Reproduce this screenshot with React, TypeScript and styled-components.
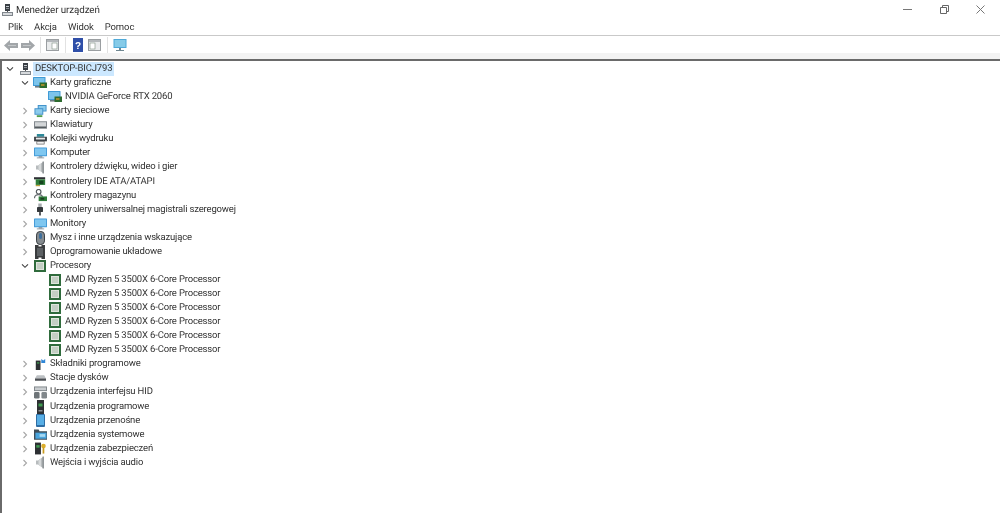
import React from "react";
import styled, { createGlobalStyle } from "styled-components";

const GlobalStyle = createGlobalStyle`
  html, body {
    margin: 0;
    padding: 0;
    background: #fff;
  }
  body {
    font-family: Roboto, "Noto Sans", sans-serif;
    color: #333;
    text-rendering: geometricPrecision;
  }
`;

type IconName =
  | "display"
  | "network"
  | "keyboard"
  | "printer"
  | "monitor"
  | "speaker"
  | "ide"
  | "storage"
  | "usb"
  | "mouse"
  | "firmware"
  | "cpu"
  | "software"
  | "disk"
  | "hid"
  | "prog"
  | "portable"
  | "system"
  | "security";

type Node = { label: string; icon: IconName; level: number; state?: "open" | "closed" };

const cpuRows: Node[] = Array.from({ length: 6 }, () => ({
  label: "AMD Ryzen 5 3500X 6-Core Processor",
  icon: "cpu" as IconName,
  level: 2,
}));

const tree: Node[] = [
  { label: "Karty graficzne", icon: "display", level: 1, state: "open" },
  { label: "NVIDIA GeForce RTX 2060", icon: "display", level: 2 },
  { label: "Karty sieciowe", icon: "network", level: 1, state: "closed" },
  { label: "Klawiatury", icon: "keyboard", level: 1, state: "closed" },
  { label: "Kolejki wydruku", icon: "printer", level: 1, state: "closed" },
  { label: "Komputer", icon: "monitor", level: 1, state: "closed" },
  { label: "Kontrolery dźwięku, wideo i gier", icon: "speaker", level: 1, state: "closed" },
  { label: "Kontrolery IDE ATA/ATAPI", icon: "ide", level: 1, state: "closed" },
  { label: "Kontrolery magazynu", icon: "storage", level: 1, state: "closed" },
  { label: "Kontrolery uniwersalnej magistrali szeregowej", icon: "usb", level: 1, state: "closed" },
  { label: "Monitory", icon: "monitor", level: 1, state: "closed" },
  { label: "Mysz i inne urządzenia wskazujące", icon: "mouse", level: 1, state: "closed" },
  { label: "Oprogramowanie układowe", icon: "firmware", level: 1, state: "closed" },
  { label: "Procesory", icon: "cpu", level: 1, state: "open" },
  ...cpuRows,
  { label: "Składniki programowe", icon: "software", level: 1, state: "closed" },
  { label: "Stacje dysków", icon: "disk", level: 1, state: "closed" },
  { label: "Urządzenia interfejsu HID", icon: "hid", level: 1, state: "closed" },
  { label: "Urządzenia programowe", icon: "prog", level: 1, state: "closed" },
  { label: "Urządzenia przenośne", icon: "portable", level: 1, state: "closed" },
  { label: "Urządzenia systemowe", icon: "system", level: 1, state: "closed" },
  { label: "Urządzenia zabezpieczeń", icon: "security", level: 1, state: "closed" },
  { label: "Wejścia i wyjścia audio", icon: "speaker", level: 1, state: "closed" },
];

const PcGlyph = () => (
  <svg width="11" height="12" viewBox="0 0 11 12">
    <rect x="3" y="0" width="5" height="7" fill="#3a3f45" />
    <rect x="4" y="2" width="3" height="1" fill="#c9ced2" />
    <rect x="4" y="4" width="3" height="1" fill="#8b9095" />
    <rect x="0" y="8" width="11" height="4" fill="#80868c" />
    <rect x="1" y="9" width="9" height="2" fill="#d6d9dc" />
    <rect x="5" y="7" width="1" height="1" fill="#555" />
  </svg>
);

const DeviceIcon = ({ name }: { name: IconName }) => {
  switch (name) {
    case "display":
      return (
        <svg width="14" height="12" viewBox="0 0 14 12">
          <rect x="0" y="0" width="12.5" height="9" rx="0.5" fill="#3f9ad6" />
          <rect x="1" y="1" width="10.5" height="7" fill="#7cc4ec" />
          <rect x="2" y="9" width="6" height="1.6" fill="#6d7a83" />
          <rect x="6.5" y="5.5" width="7.5" height="5.5" fill="#2d6b2f" />
          <rect x="8" y="7" width="3.5" height="2" fill="#9c8a2c" />
        </svg>
      );
    case "network":
      return (
        <svg width="13" height="13" viewBox="0 0 14 14">
          <rect x="4" y="0" width="9.5" height="7" fill="#3f8fc9" />
          <rect x="5" y="1" width="7.5" height="5" fill="#8ccbec" />
          <rect x="0.5" y="3.5" width="9.5" height="7" fill="#3f8fc9" />
          <rect x="1.5" y="4.5" width="7.5" height="5" fill="#8ccbec" />
          <rect x="3" y="11" width="6" height="2" fill="#4f9e4f" />
        </svg>
      );
    case "keyboard":
      return (
        <svg width="13" height="10" viewBox="0 0 14 10">
          <rect x="0" y="1" width="14" height="8" fill="#7d8388" />
          <rect x="1" y="2" width="12" height="4.5" fill="#d3d6d8" />
          <rect x="1" y="7" width="12" height="1" fill="#4d5256" />
        </svg>
      );
    case "printer":
      return (
        <svg width="13" height="11" viewBox="0 0 14 12">
          <rect x="3" y="0" width="8" height="3" fill="#2e8a9a" />
          <rect x="0" y="3" width="14" height="5" fill="#3b4045" />
          <rect x="2" y="4" width="10" height="2" fill="#e7e9ea" />
          <rect x="3" y="8" width="8" height="3" fill="#f2f2f2" stroke="#555" strokeWidth="0.7" />
        </svg>
      );
    case "monitor":
      return (
        <svg width="13" height="12" viewBox="0 0 14 13">
          <rect x="0" y="0.5" width="14" height="9.5" rx="0.6" fill="#3e97d6" />
          <rect x="1" y="1.5" width="12" height="7.5" fill="#7fc7f0" />
          <rect x="5" y="10" width="4" height="1.5" fill="#7b8b96" />
          <rect x="3" y="11.3" width="8" height="1" fill="#8f9aa2" />
        </svg>
      );
    case "speaker":
      return (
        <svg width="8" height="13" viewBox="0 0 8 13">
          <path d="M0 4.5h2L7 1v11L2 8.5H0z" fill="#b7bbbd" />
          <path d="M2.5 4.2v4.6L5 10.6V2.4z" fill="#d6d9da" />
          <rect x="6.6" y="0.5" width="1.2" height="12" fill="#777d80" />
        </svg>
      );
    case "ide":
      return (
        <svg width="12" height="11" viewBox="0 0 14 12">
          <rect x="0" y="1" width="13" height="2.5" fill="#2d3034" />
          <rect x="2" y="3.5" width="11" height="6.5" fill="#2f7d3a" />
          <rect x="6" y="5" width="5" height="4" fill="#16451f" />
          <rect x="2" y="10" width="5" height="1.5" fill="#b8a23c" />
        </svg>
      );
    case "storage":
      return (
        <svg width="13" height="13" viewBox="0 0 14 14">
          <circle cx="5" cy="3" r="2.5" fill="none" stroke="#555b5f" strokeWidth="1.3" />
          <path d="M0.5 10c0-3 2-4 4.5-4s4 1 4 2.5" fill="none" stroke="#666c70" strokeWidth="1.3" />
          <rect x="5" y="8" width="9" height="5" fill="#2f7d3a" />
          <rect x="7" y="9.5" width="4" height="2" fill="#1c3d22" />
        </svg>
      );
    case "usb":
      return (
        <svg width="6" height="13" viewBox="0 0 7 14">
          <rect x="1.5" y="0" width="4" height="4" fill="#a7abae" />
          <rect x="0" y="4" width="7" height="6" rx="1" fill="#34383b" />
          <rect x="2.5" y="10" width="2" height="4" fill="#3d4246" />
        </svg>
      );
    case "mouse":
      return (
        <svg width="9" height="14" viewBox="0 0 9 14">
          <rect x="0.5" y="0.5" width="8" height="13" rx="3.6" fill="#858b8f" stroke="#3c4145" />
          <rect x="3" y="2" width="3" height="6" rx="1.5" fill="#3f6f9c" />
        </svg>
      );
    case "firmware":
      return (
        <svg width="10" height="14" viewBox="0 0 10 14">
          <path d="M0 0h3.5v1.5h3V0H10v14H6.5v-1.5h-3V14H0z" fill="#3a3c3e" />
          <rect x="2" y="3" width="6" height="8" fill="#5d6164" />
        </svg>
      );
    case "cpu":
      return (
        <svg width="12" height="12" viewBox="0 0 12 12">
          <rect x="0" y="0" width="12" height="12" fill="#2f6b3c" />
          <rect x="2" y="2" width="8" height="8" fill="#dfe5dd" />
          <rect x="3" y="3" width="6" height="6" fill="#c4cfc4" />
        </svg>
      );
    case "software":
      return (
        <svg width="11" height="13" viewBox="0 0 14 14">
          <rect x="1" y="2" width="6" height="12" fill="#2c3033" />
          <rect x="2.5" y="4" width="3" height="2" fill="#3d8a4a" />
          <path d="M8 0l2.5 2L13 0v5h-5z" fill="#2f86d6" />
        </svg>
      );
    case "disk":
      return (
        <svg width="11" height="6" viewBox="0 0 12 6">
          <path d="M2 0h8l2 3.5H0z" fill="#bcc0c3" />
          <rect x="0" y="3.5" width="12" height="2.5" fill="#4b4f53" />
        </svg>
      );
    case "hid":
      return (
        <svg width="13" height="13" viewBox="0 0 14 13">
          <rect x="0" y="0" width="14" height="5" fill="#7e8488" />
          <rect x="1" y="1" width="12" height="3" fill="#c9cdd0" />
          <rect x="0" y="6" width="6" height="7" rx="1.5" fill="#6d7478" />
          <rect x="8" y="6" width="6" height="7" rx="1.5" fill="#81878b" />
        </svg>
      );
    case "prog":
      return (
        <svg width="7" height="14" viewBox="0 0 7 14">
          <rect x="0" y="0" width="7" height="14" fill="#2d3033" />
          <rect x="1.5" y="3.5" width="4" height="3" fill="#3f9a50" />
          <rect x="1.5" y="10" width="4" height="1.5" fill="#8b9094" />
        </svg>
      );
    case "portable":
      return (
        <svg width="9" height="13" viewBox="0 0 9 13">
          <rect x="0" y="0" width="9" height="13" rx="1" fill="#2f6da3" />
          <rect x="1" y="1" width="7" height="10" fill="#58aee5" />
        </svg>
      );
    case "system":
      return (
        <svg width="13" height="12" viewBox="0 0 14 12">
          <path d="M0 0h5l1 2h8v9H0z" fill="#3f4d58" />
          <rect x="1.5" y="3.5" width="12" height="6.5" fill="#4aa5de" />
          <rect x="6" y="5" width="6" height="3" fill="#a5d8f2" />
        </svg>
      );
    case "security":
      return (
        <svg width="11" height="13" viewBox="0 0 13 14">
          <rect x="0" y="0" width="7" height="14" fill="#2d3033" />
          <rect x="1.5" y="3" width="4" height="3" fill="#3f9a50" />
          <circle cx="10" cy="4" r="2.7" fill="#dcae2c" />
          <rect x="9" y="6" width="2" height="7" fill="#c99b1f" />
        </svg>
      );
    default:
      return null;
  }
};

const ChevronRight = () => (
  <svg width="6" height="8" viewBox="0 0 6 8">
    <path d="M1.5 1l3 3-3 3" fill="none" stroke="#a6a6a6" strokeWidth="1.1" />
  </svg>
);

const ChevronDown = () => (
  <svg width="8" height="6" viewBox="0 0 8 6">
    <path d="M1 1.3l3 3 3-3" fill="none" stroke="#404040" strokeWidth="1.1" />
  </svg>
);

const App = () => {
  return (
    <>
      <GlobalStyle />
      <Window>
        <TitleBar>
          <TitleLeft>
            <PcGlyph />
            <TitleText>Menedżer urządzeń</TitleText>
          </TitleLeft>
          <Controls>
            <ControlButton>
              <svg width="9" height="2" viewBox="0 0 9 2">
                <rect width="9" height="1" fill="#777" />
              </svg>
            </ControlButton>
            <ControlButton>
              <svg width="9" height="9" viewBox="0 0 9 9">
                <path d="M0.5 2.5h6v6h-6zM2.5 2.5v-2h6v6h-2" fill="none" stroke="#666" />
              </svg>
            </ControlButton>
            <ControlButton>
              <svg width="9" height="9" viewBox="0 0 9 9">
                <path d="M0.5 0.5l8 8M8.5 0.5l-8 8" stroke="#777" />
              </svg>
            </ControlButton>
          </Controls>
        </TitleBar>

        <MenuBar>
          <MenuItem>Plik</MenuItem>
          <MenuItem>Akcja</MenuItem>
          <MenuItem>Widok</MenuItem>
          <MenuItem>Pomoc</MenuItem>
        </MenuBar>

        <ToolBar>
          <ToolIcon>
            <svg width="14" height="11" viewBox="0 0 14 11">
              <path d="M0 5.5L6 0v3h8v5H6v3z" fill="#a2a6a9" />
              <path d="M4 5.5h8" stroke="#c3c6c8" />
            </svg>
          </ToolIcon>
          <ToolIcon>
            <svg width="14" height="11" viewBox="0 0 14 11">
              <path d="M14 5.5L8 0v3H0v5h8v3z" fill="#a2a6a9" />
              <path d="M2 5.5h8" stroke="#c3c6c8" />
            </svg>
          </ToolIcon>
          <ToolSep />
          <ToolIcon>
            <svg width="13" height="12" viewBox="0 0 13 12">
              <rect x="0.5" y="0.5" width="12" height="11" fill="#e9ebec" stroke="#9a9ea1" />
              <rect x="1" y="1" width="11" height="2" fill="#b4b8bb" />
              <rect x="6" y="4" width="5" height="6" fill="#fff" stroke="#7d8e80" strokeWidth="0.6" />
            </svg>
          </ToolIcon>
          <ToolSep />
          <ToolIcon>
            <svg width="10" height="14" viewBox="0 0 10 14">
              <rect width="10" height="14" fill="#2f4fa8" />
              <text x="5" y="11" fontSize="10" fontWeight="700" fontFamily="Liberation Sans, sans-serif" textAnchor="middle" fill="#fff">?</text>
            </svg>
          </ToolIcon>
          <ToolIcon>
            <svg width="13" height="12" viewBox="0 0 13 12">
              <rect x="0.5" y="0.5" width="12" height="11" fill="#e9ebec" stroke="#9a9ea1" />
              <rect x="1" y="1" width="11" height="2" fill="#b4b8bb" />
              <rect x="2" y="4" width="5" height="6" fill="#fff" stroke="#7d8e80" strokeWidth="0.6" />
            </svg>
          </ToolIcon>
          <ToolSep />
          <ToolIcon>
            <svg width="14" height="13" viewBox="0 0 14 13">
              <rect x="0.5" y="0" width="13" height="9" fill="#4fa9d8" />
              <rect x="1.5" y="1" width="11" height="7" fill="#86cbe8" />
              <rect x="6" y="9" width="2" height="2" fill="#6f8791" />
              <rect x="3" y="11" width="8" height="1" fill="#6f8791" />
            </svg>
          </ToolIcon>
        </ToolBar>

        <TreePane>
          <RootRow>
            <ChevronSlot>
              <ChevronDown />
            </ChevronSlot>
            <IconSlot>
              <PcGlyph />
            </IconSlot>
            <RootLabel>DESKTOP-BICJ793</RootLabel>
          </RootRow>
          {tree.map((node, i) => (
            <Row key={i} $level={node.level}>
              <ChevronSlot>
                {node.state === "open" && <ChevronDown />}
                {node.state === "closed" && <ChevronRight />}
              </ChevronSlot>
              <IconSlot>
                <DeviceIcon name={node.icon} />
              </IconSlot>
              <Label>{node.label}</Label>
            </Row>
          ))}
        </TreePane>
      </Window>
    </>
  );
};

export default App;

const Window = styled.div`
  width: 1000px;
  height: 513px;
  display: flex;
  flex-direction: column;
  overflow: hidden;
  background: #fff;
  filter: blur(0.4px);
`;

const TitleBar = styled.div`
  height: 19px;
  display: flex;
  align-items: center;
  justify-content: space-between;
`;

const TitleLeft = styled.div`
  display: flex;
  align-items: center;
  padding-left: 2px;
`;

const TitleText = styled.span`
  font-size: 9.8px;
  letter-spacing: -0.1px;
  margin: 1px 0 0 3px;
  color: #333;
`;

const Controls = styled.div`
  display: flex;
  padding-right: 1px;
`;

const ControlButton = styled.div`
  width: 36.5px;
  height: 18px;
  display: flex;
  align-items: center;
  justify-content: center;
`;

const MenuBar = styled.div`
  height: 16px;
  display: flex;
  align-items: center;
  padding: 1px 0 0 8px;
  box-sizing: content-box;
  margin-top: -1px;
  gap: 11px;
  border-bottom: 1px solid #c9c9c9;
`;

const MenuItem = styled.span`
  font-size: 9.5px;
  letter-spacing: -0.1px;
  color: #333;
`;

const ToolBar = styled.div`
  height: 23px;
  display: flex;
  align-items: center;
  gap: 3px;
  padding: 0 0 5px 3.5px;
  box-sizing: border-box;
  background: linear-gradient(#fff 0 75%, #f3f3f3 75%);
`;

const ToolIcon = styled.div`
  width: 14px;
  height: 16px;
  display: flex;
  align-items: center;
  justify-content: center;
`;

const ToolSep = styled.div`
  width: 1px;
  height: 16px;
  margin: 0 2px;
  background: #e2e2e2;
`;

const TreePane = styled.div`
  flex: 1;
  border-top: 2px solid #6a6a6a;
  border-left: 2px solid #6a6a6a;
  padding-top: 1px;
`;

const Row = styled.div<{ $level: number }>`
  height: 14.07px;
  display: flex;
  align-items: center;
  padding-left: ${(p) => p.$level * 15 + 2}px;
`;

const RootRow = styled(Row).attrs({ $level: 0 })``;

const ChevronSlot = styled.div`
  width: 11px;
  height: 14px;
  display: flex;
  align-items: center;
  justify-content: center;
  flex-shrink: 0;
`;

const IconSlot = styled.div`
  width: 16px;
  margin-left: 2px;
  height: 14px;
  display: flex;
  align-items: center;
  justify-content: center;
  flex-shrink: 0;
`;

const Label = styled.span`
  font-size: 9.5px;
  letter-spacing: -0.17px;
  line-height: 14px;
  margin-left: 2px;
  white-space: nowrap;
  color: #333;
`;

const RootLabel = styled(Label)`
  background: #cce8ff;
  padding: 0 2px;
  margin-left: 0;
`;
